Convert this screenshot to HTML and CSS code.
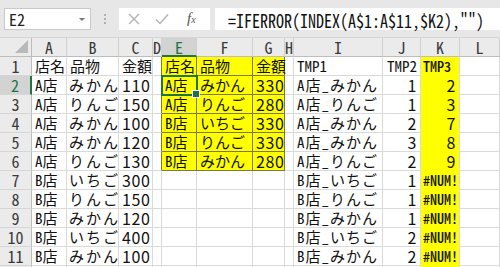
FILE: index.html
```html
<!DOCTYPE html>
<html lang="ja">
<head>
<meta charset="utf-8">
<title>Excel</title>
<link rel="stylesheet" href="styles.css">
</head>
<body>
<div class="toolbar">
  <div class="namebox"><span class="nb-text">E2</span><span class="nb-arrow"></span></div>
  <div class="grip"><span></span><span></span><span></span></div>
  <div class="fxbtns">
    <svg class="ico" width="12" height="12" viewBox="0 0 12 12"><path d="M1 1L11 11M11 1L1 11" stroke="#b3b3b3" stroke-width="1.4" fill="none"/></svg>
    <svg class="ico" width="14" height="12" viewBox="0 0 14 12"><path d="M1 6.5L5 10.5L13 1.5" stroke="#b3b3b3" stroke-width="1.4" fill="none"/></svg>
    <span class="fx"><span class="fx-f">f</span><span class="fx-x">x</span></span>
  </div>
  <div class="formula"><span class="ftext">=IFERROR(INDEX(A$1:A$11,$K2),"")</span></div>
</div>
<div class="sheet">
  <div class="hd corner"><span class="tri"></span></div>
  <div class="hd">A</div><div class="hd">B</div><div class="hd">C</div><div class="hd">D</div>
  <div class="hd hsel">E</div><div class="hd">F</div><div class="hd">G</div><div class="hd">H</div>
  <div class="hd">I</div><div class="hd">J</div><div class="hd">K</div><div class="hd">L</div>

  <div class="rh">1</div>
  <div class="c">店名</div><div class="c">品物</div><div class="c">金額</div><div class="c tl"></div>
  <div class="c t">店名</div><div class="c t">品物</div><div class="c t">金額</div><div class="c"></div>
  <div class="c">TMP1</div><div class="c n">TMP2</div><div class="c k kf">TMP3</div><div class="c"></div>

  <div class="rh rsel">2</div>
  <div class="c">A店</div><div class="c sp">みかん</div><div class="c n num">110</div><div class="c tl"></div>
  <div class="c t sel">A店</div><div class="c t">みかん</div><div class="c t n num">330</div><div class="c"></div>
  <div class="c ic">A店_みかん</div><div class="c n num">1</div><div class="c k n num">2</div><div class="c"></div>

  <div class="rh">3</div>
  <div class="c">A店</div><div class="c sp">りんご</div><div class="c n num">150</div><div class="c tl"></div>
  <div class="c t">A店</div><div class="c t">りんご</div><div class="c t n num">280</div><div class="c"></div>
  <div class="c ic">A店_りんご</div><div class="c n num">1</div><div class="c k n num">3</div><div class="c"></div>

  <div class="rh">4</div>
  <div class="c">A店</div><div class="c sp">みかん</div><div class="c n num">100</div><div class="c tl"></div>
  <div class="c t">B店</div><div class="c t">いちご</div><div class="c t n num">330</div><div class="c"></div>
  <div class="c ic">A店_みかん</div><div class="c n num">2</div><div class="c k n num">7</div><div class="c"></div>

  <div class="rh">5</div>
  <div class="c">A店</div><div class="c sp">みかん</div><div class="c n num">120</div><div class="c tl"></div>
  <div class="c t">B店</div><div class="c t">りんご</div><div class="c t n num">330</div><div class="c"></div>
  <div class="c ic">A店_みかん</div><div class="c n num">3</div><div class="c k n num">8</div><div class="c"></div>

  <div class="rh">6</div>
  <div class="c">A店</div><div class="c sp">りんご</div><div class="c n num">130</div><div class="c tl"></div>
  <div class="c t">B店</div><div class="c t">みかん</div><div class="c t n num">280</div><div class="c"></div>
  <div class="c ic">A店_りんご</div><div class="c n num">2</div><div class="c k n num">9</div><div class="c"></div>

  <div class="rh">7</div>
  <div class="c">B店</div><div class="c sp">いちご</div><div class="c n num">300</div><div class="c"></div>
  <div class="c"></div><div class="c"></div><div class="c"></div><div class="c"></div>
  <div class="c ic">B店_いちご</div><div class="c n num">1</div><div class="c k kf">#NUM!</div><div class="c"></div>

  <div class="rh">8</div>
  <div class="c">B店</div><div class="c sp">りんご</div><div class="c n num">150</div><div class="c"></div>
  <div class="c"></div><div class="c"></div><div class="c"></div><div class="c"></div>
  <div class="c ic">B店_りんご</div><div class="c n num">1</div><div class="c k kf">#NUM!</div><div class="c"></div>

  <div class="rh">9</div>
  <div class="c">B店</div><div class="c sp">みかん</div><div class="c n num">120</div><div class="c"></div>
  <div class="c"></div><div class="c"></div><div class="c"></div><div class="c"></div>
  <div class="c ic">B店_みかん</div><div class="c n num">1</div><div class="c k kf">#NUM!</div><div class="c"></div>

  <div class="rh">10</div>
  <div class="c">B店</div><div class="c sp">いちご</div><div class="c n num">400</div><div class="c"></div>
  <div class="c"></div><div class="c"></div><div class="c"></div><div class="c"></div>
  <div class="c ic">B店_いちご</div><div class="c n num">2</div><div class="c k kf">#NUM!</div><div class="c"></div>

  <div class="rh">11</div>
  <div class="c">B店</div><div class="c sp">みかん</div><div class="c n num">100</div><div class="c"></div>
  <div class="c"></div><div class="c"></div><div class="c"></div><div class="c"></div>
  <div class="c ic">B店_みかん</div><div class="c n num">2</div><div class="c k kf">#NUM!</div><div class="c"></div>

  <div class="rh rlast"></div>
  <div class="c"></div><div class="c"></div><div class="c"></div><div class="c"></div>
  <div class="c"></div><div class="c"></div><div class="c"></div><div class="c"></div>
  <div class="c"></div><div class="c"></div><div class="c k"></div><div class="c"></div>
</div>
</body>
</html>
```
FILE: styles.css
```css
* { box-sizing: border-box; }
html, body {
  margin: 0;
  padding: 0;
}
body {
  width: 500px;
  height: 267px;
  overflow: hidden;
  background: #ffffff;
  font-family: "Noto Sans CJK JP", "Noto Sans", sans-serif;
  color: #000;
}

/* ---------- formula bar ---------- */
.toolbar {
  height: 38px;
  background: #e7e7e7;
  display: flex;
  align-items: flex-start;
  padding-top: 8px;
  border-bottom: 1px solid #d6d6d6;
}
.namebox {
  margin-left: 4px;
  width: 87px;
  height: 22px;
  background: #fff;
  border: 1px solid #c9c9c9;
  display: flex;
  align-items: center;
  justify-content: space-between;
  padding: 0 5px 0 4px;
}
.nb-text {
  font-size: 16px;
  line-height: 20px;
  color: #222;
  font-feature-settings: "hwid";
}
.nb-arrow {
  width: 0;
  height: 0;
  border-left: 3px solid transparent;
  border-right: 3px solid transparent;
  border-top: 3px solid #777;
}
.grip {
  width: 28px;
  height: 22px;
  display: flex;
  flex-direction: column;
  align-items: center;
  justify-content: center;
  gap: 2px;
}
.grip span {
  width: 2px;
  height: 2px;
  background: #b0b0b0;
}
.fxbtns {
  width: 91px;
  height: 22px;
  background: #fff;
  display: flex;
  align-items: center;
  padding-left: 9px;
  gap: 15px;
}
.ico { display: block; }
.fx {
  font-family: "Liberation Serif", serif;
  font-style: italic;
  color: #555;
  font-size: 15px;
  line-height: 20px;
  margin-left: 3px;
}
.fx-x { font-size: 10px; }
.formula {
  flex: 1;
  margin-left: 5px;
  height: 22px;
  background: #fff;
  padding-left: 13px;
  white-space: nowrap;
}
.ftext {
  display: inline-block;
  font-size: 16px;
  line-height: 21px;
  font-feature-settings: "hwid";
  color: #111;
  transform: scaleY(1.12);
  transform-origin: left center;
}

/* ---------- sheet grid ---------- */
.sheet {
  display: grid;
  grid-template-columns: 32px 35px 52px 34px 9px 35px 56px 32px 9px 89px 38px 39px 40px;
  grid-template-rows: repeat(12, 19px) 10px;
  height: 229px;
  overflow: hidden;
}
.hd, .rh {
  background: #ebebeb;
  color: #3a3a3a;
  font-size: 16px;
  line-height: 18px;
  font-feature-settings: "hwid";
  text-align: center;
  border-right: 1px solid #d0d0d0;
  border-bottom: 1px solid #bdbdbd;
  white-space: nowrap;
}
.rh {
  border-right: 1px solid #bdbdbd;
  border-bottom: 1px solid #d6d6d6;
}
.corner {
  position: relative;
  border-right: 1px solid #bdbdbd;
}
.tri {
  position: absolute;
  right: 3px;
  bottom: 3px;
  width: 0;
  height: 0;
  border-left: 13px solid transparent;
  border-bottom: 13px solid #b9b9b9;
}
.hsel {
  background: #d3d3d3;
  color: #217346;
  border-bottom: 2px solid #217346;
}
.rsel {
  background: #d3d3d3;
  color: #217346;
  border-right: 2px solid #217346;
}

.c {
  font-size: 15px;
  line-height: 18px;
  font-feature-settings: "hwid";
  padding: 0 3px;
  border-right: 1px solid #dadada;
  border-bottom: 1px solid #dadada;
  white-space: nowrap;
  color: #111;
}
.n { text-align: right; }
.num {
  font-size: 16px;
  font-feature-settings: normal;
  letter-spacing: 0.6px;
}
.sp {
  letter-spacing: 2px;
  padding-left: 2px;
}
.ic { letter-spacing: 1px; }
.t {
  background: #ffff00;
  border-right-color: #7a7a3c;
  border-bottom-color: #7a7a3c;
}
.tl { border-right-color: #7a7a3c; }
.k {
  background: #ffff00;
  border-bottom-color: #ffff00;
}
.kf {
  font-size: 14px;
  font-weight: 500;
  padding-left: 2px;
  letter-spacing: 0;
}
.sel {
  position: relative;
  outline: 2px solid #217346;
  outline-offset: -1px;
}
.sel::after {
  content: "";
  position: absolute;
  right: -4px;
  bottom: -4px;
  width: 6px;
  height: 6px;
  background: #217346;
  border: 1px solid #fff;
}
```
